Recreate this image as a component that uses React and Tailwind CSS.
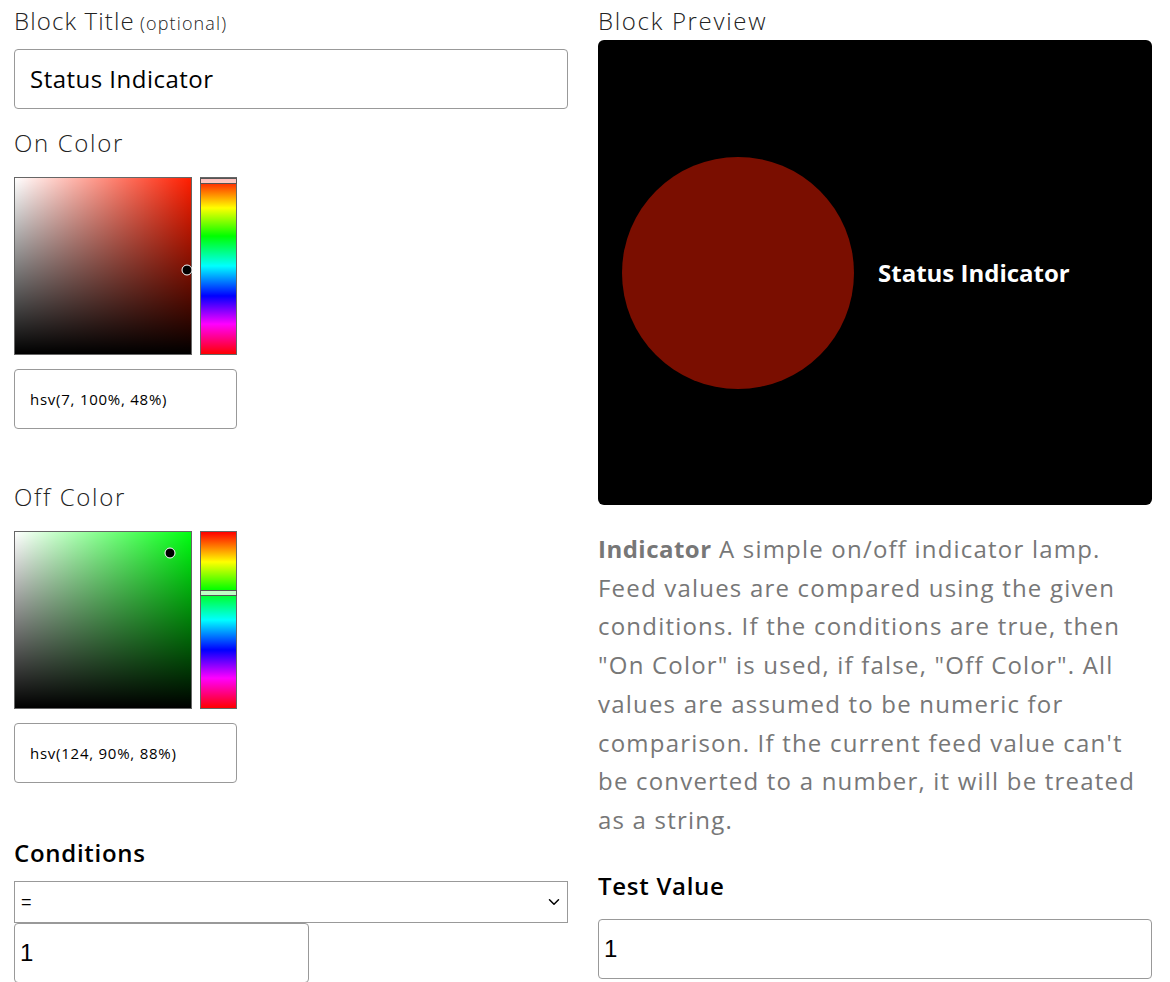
import { ChevronDown } from "lucide-react";

const font = { fontFamily: "'Open Sans', Lato, sans-serif" };
const arial = { fontFamily: "'Liberation Sans', Arial, sans-serif" };

const descLines = [
  "Feed values are compared using the given",
  "conditions. If the conditions are true, then",
  "\"On Color\" is used, if false, \"Off Color\". All",
  "values are assumed to be numeric for",
  "comparison. If the current feed value can't",
  "be converted to a number, it will be treated",
  "as a string.",
];

function ColorPicker({ hue, s, v, label }) {
  // hue bar runs red at top to red at bottom
  const hueColor = `hsl(${hue}, 100%, 50%)`;
  return (
    <div>
      <div className="text-[24px] font-light leading-[30px] tracking-[0.07em] text-[#222]">{label}</div>
      <div className="mt-[19px] flex gap-[8px]">
        <div
          className="relative h-[178px] w-[178px] border border-[#666]"
          style={{ backgroundColor: hueColor }}
        >
          <div className="absolute inset-0 bg-gradient-to-r from-white to-transparent" />
          <div className="absolute inset-0 bg-gradient-to-b from-transparent to-black" />
          <div
            className="absolute h-[11px] w-[11px] -translate-x-1/2 -translate-y-1/2 rounded-full border border-white bg-black"
            style={{ left: `${s * 172}px`, top: `${(1 - v) * 176}px` }}
          />
        </div>
        <div className="relative h-[178px] w-[37px] border border-[#666] bg-[linear-gradient(to_bottom,#f00_0%,#ff0_17%,#0f0_33%,#0ff_50%,#00f_67%,#f0f_83%,#f00_100%)]">
          <div
            className="absolute -left-px -right-px h-[6px] border border-[#555] bg-white/75"
            style={{ top: `${(hue / 360) * 176 - 3}px` }}
          />
        </div>
      </div>
      <div className="mt-[14px] flex h-[60px] w-[223px] items-center rounded-[4px] border border-[#999] px-[15px] text-[15px] tracking-[0.05em] text-black">
        hsv({hue}, {Math.round(s * 100)}%, {Math.round(v * 100)}%)
      </div>
    </div>
  );
}

export default function App() {
  return (
    <div className="flex gap-[30px] bg-white pl-[14px] pr-[18px] pt-[4px]" style={font}>
      {/* LEFT: settings */}
      <div className="w-[554px]">
        <div className="leading-[34px] tracking-[0.07em] text-[#222]">
          <span className="text-[24px] font-light">Block Title</span>{" "}
          <span className="text-[18px] font-light">(optional)</span>
        </div>
        <div className="mt-[8px] flex h-[60px] items-center rounded-[4px] border border-[#999] px-[15px] text-[24px] tracking-[0.02em] text-black">
          Status Indicator
        </div>

        <div className="mt-[19px]">
          <ColorPicker label="On Color" hue={7} s={1} v={0.48} />
        </div>
        <div className="mt-[53px]">
          <ColorPicker label="Off Color" hue={124} s={0.9} v={0.88} />
        </div>

        <div className="mt-[55px] text-[24px] font-semibold leading-[30px] tracking-[0.03em] text-black">Conditions</div>
        <div className="mt-[13px] flex h-[42px] items-center justify-between border border-[#999] pl-[6px] pr-[4px] text-[18px] text-black" style={arial}>
          <span>=</span>
          <ChevronDown size={18} strokeWidth={2} />
        </div>
        <div className="flex h-[60px] w-[295px] items-center rounded-[4px] border border-[#999] px-[5px] text-[24px] text-black" style={arial}>
          1
        </div>
      </div>

      {/* RIGHT: preview */}
      <div className="w-[554px]">
        <div className="text-[24px] font-light leading-[34px] tracking-[0.07em] text-[#222]">Block Preview</div>
        <div className="mt-[2px] flex h-[465px] items-center rounded-[6px] bg-black pl-[24px]">
          <div className="h-[232px] w-[232px] rounded-full bg-[#7a0e00]" />
          <div className="ml-[24px] text-[24px] font-bold text-white">Status Indicator</div>
        </div>

        <div className="mt-[25px] text-[24px] leading-[38.7px] tracking-[0.05em] text-[#777]">
          <div className="whitespace-nowrap">
            <span className="font-bold tracking-[0.02em]">Indicator</span> A simple on/off indicator lamp.
          </div>
          {descLines.map((line) => (
            <div key={line} className="whitespace-nowrap">
              {line}
            </div>
          ))}
        </div>

        <div className="mt-[31px] text-[24px] font-semibold leading-[30px] tracking-[0.03em] text-black">Test Value</div>
        <div className="mt-[18px] flex h-[60px] items-center rounded-[4px] border border-[#999] px-[5px] text-[24px] text-black" style={arial}>
          1
        </div>
      </div>
    </div>
  );
}
